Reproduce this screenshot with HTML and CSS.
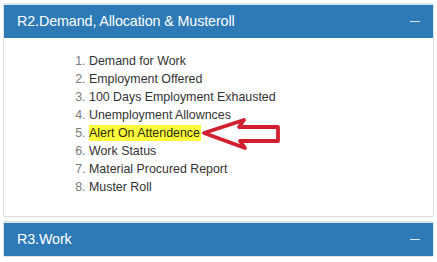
FILE: index.html
```html
<!DOCTYPE html>
<html>
<head>
<meta charset="utf-8">
<link rel="stylesheet" href="styles.css">
</head>
<body>
<div class="panel first">
  <div class="panel-heading">
    <span class="title">R2.Demand, Allocation &amp; Musteroll</span>
    <span class="toggle"></span>
  </div>
  <div class="panel-body">
    <ol class="report-list">
      <li>Demand for Work</li>
      <li>Employment Offered</li>
      <li>100 Days Employment Exhausted</li>
      <li>Unemployment Allownces</li>
      <li><span class="highlight">Alert On Attendence</span>
        <svg class="arrow" width="84" height="34" viewBox="0 0 84 34">
          <path d="M5 16 L45 3 L40 10 L79 10 L79 24 L41 24 L46 31 Z" fill="#fff" stroke="#d01f2e" stroke-width="3.8" stroke-linejoin="round"/>
        </svg>
      </li>
      <li>Work Status</li>
      <li>Material Procured Report</li>
      <li>Muster Roll</li>
    </ol>
  </div>
</div>
<div class="panel">
  <div class="panel-heading">
    <span class="title">R3.Work</span>
    <span class="toggle"></span>
  </div>
</div>
</body>
</html>
```

FILE: styles.css
```css
html, body {
  margin: 0;
  background: #fff;
}
body {
  padding: 3px 3px 0 3px;
  font-family: "Liberation Sans", Arial, sans-serif;
}
.panel {
  border: 1px solid #dfe3e6;
  border-radius: 2px;
  box-shadow: 0 1px 1px rgba(0,0,0,0.05);
}
.panel.first {
  margin-bottom: 4px;
}
.panel-heading {
  background: #2d7ab6;
  color: #fff;
  height: 33px;
  display: flex;
  align-items: center;
  justify-content: space-between;
  padding: 0 13px 0 13px;
  border-top: 1px solid #cfe6f5;
}
.title {
  font-size: 14.3px;
  letter-spacing: -0.1px;
  margin-top: -1px;
}
.toggle {
  width: 10px;
  height: 1.5px;
  background: #d8e8f4;
  margin-right: 0;
}
.panel-body {
  height: 178px;
  padding-top: 14px;
  box-sizing: border-box;
}
.report-list {
  margin: 0;
  padding-left: 85px;
  font-size: 12.4px;
  line-height: 18px;
  color: #333;
}
.report-list li::marker {
  color: #7a7a7a;
}
.report-list li {
  position: relative;
}
.highlight {
  background: #ffff3a;
  padding: 1px 1px 1px 0;
  color: #2a2a10;
}
.arrow {
  position: absolute;
  left: 110px;
  top: -7px;
}
```
